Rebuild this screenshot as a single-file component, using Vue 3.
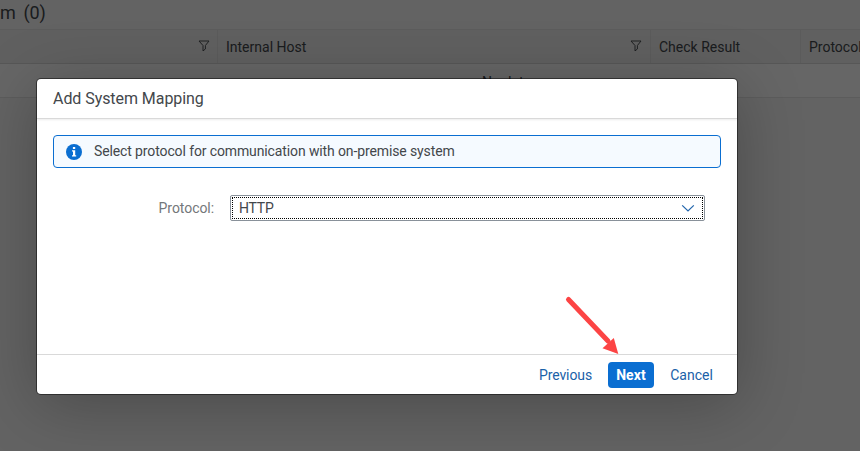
<script setup>
const columns = [
  { key: 'virtual', label: '', filter: true },
  { key: 'internal', label: 'Internal Host', filter: true },
  { key: 'check', label: 'Check Result', filter: false },
  { key: 'protocol', label: 'Protocol', filter: false },
]
</script>

<template>
  <div class="page">
    <main class="background">
      <h2 class="title"><span>m</span><span>(0)</span></h2>
      <div class="table-head">
        <div v-for="c in columns" :key="c.key" class="th" :class="c.key">
          <span>{{ c.label }}</span>
          <svg v-if="c.filter" class="filter" width="12" height="12" viewBox="0 0 12 12">
            <path d="M1 1H11L7.4 5.5V9L5 10.9V5.5Z" fill="none" stroke="#4c5054" stroke-width="1" stroke-linejoin="round" />
          </svg>
        </div>
      </div>
      <div class="empty-row">No data</div>
    </main>
    <div class="overlay">
      <section class="dialog" role="dialog">
        <header class="dialog-head">Add System Mapping</header>
        <div class="dialog-body">
          <div class="strip">
            <svg width="16" height="16" viewBox="0 0 16 16">
              <circle cx="8" cy="8" r="8" fill="#0a6ed1" />
              <path d="M6.9 3h2.3v2H6.9zM6 6.3h3.2v4.9h1v1.3H6v-1.3h1V7.6H6z" fill="#fff" />
            </svg>
            <span class="message">Select protocol for communication with on-premise system</span>
          </div>
          <div class="field">
            <label>Protocol:</label>
            <div class="select">
              <div class="focus">
                <span class="value">HTTP</span>
                <svg width="14" height="8" viewBox="0 0 14 8">
                  <path d="M1.2 1.4L7 6.9L12.8 1.4" fill="none" stroke="#2467ad" stroke-width="1.3" />
                </svg>
              </div>
            </div>
          </div>
        </div>
        <footer class="dialog-foot">
          <button class="prev">Previous</button>
          <button class="next">Next</button>
          <button class="cancel">Cancel</button>
        </footer>
      </section>
      <svg class="arrow" width="56" height="62" viewBox="0 0 56 62">
        <path d="M5.5 6.5L45 48" stroke="#fc4444" stroke-width="5" stroke-linecap="round" />
        <path d="M55.3 61L50.8 45L39.5 55.3Z" fill="#fc4444" />
      </svg>
    </div>
  </div>
</template>

<style>
body { overflow: hidden; }
</style>

<style scoped>
* { box-sizing: border-box; }
.page {
  position: relative;
  width: 860px;
  height: 451px;
  overflow: hidden;
  font-family: Roboto, "Liberation Sans", sans-serif;
  font-size: 14px;
  color: #43474b;
}
.background { height: 451px; background: #f8f8f8; }
.title {
  display: flex;
  gap: 8px;
  height: 29px;
  margin: 0;
  font-size: 18px;
  font-weight: 400;
  line-height: 26px;
  letter-spacing: -0.2px;
}
.table-head {
  display: grid;
  grid-template-columns: 218px 433px 150px 150px;
  height: 35px;
  border-top: 1px solid #e5e5e5;
  border-bottom: 1px solid #d9d9d9;
  background: #f0f0f0;
}
.th {
  display: flex;
  align-items: center;
  justify-content: space-between;
  padding: 1px 8px 0;
  border-right: 1px solid #e3e3e3;
}
.filter { margin-top: -2px; }
.virtual .filter { margin-right: -1px; }
.empty-row {
  height: 34px;
  padding: 2px 0 0 482px;
  line-height: 32px;
  background: #fff;
  border-bottom: 1px solid #e5e5e5;
}
.overlay { position: absolute; inset: 0; background: rgba(0, 0, 0, 0.6); }
.dialog {
  position: absolute;
  left: 37px;
  top: 79px;
  display: flex;
  flex-direction: column;
  width: 700px;
  height: 315px;
  border-radius: 4px;
  background: #fff;
  box-shadow: 0 0 0 1px rgba(0, 0, 0, 0.45), 0 10px 65px rgba(0, 0, 0, 0.26);
}
.dialog-head {
  height: 40px;
  padding-left: 16px;
  font-size: 16px;
  line-height: 40px;
  letter-spacing: -0.06px;
  border-bottom: 1px solid #d9d9d9;
  box-shadow: 0 1px 2px rgba(0, 0, 0, 0.08);
}
.dialog-body { flex: 1; padding: 16px; }
.strip {
  display: flex;
  align-items: center;
  gap: 12px;
  height: 33px;
  padding-left: 12px;
  border: 1px solid #0a6ed1;
  border-radius: 4px;
  background: #f5faff;
}
.message { letter-spacing: -0.118px; padding-bottom: 1px; }
.field { display: flex; align-items: center; margin-top: 27px; }
.field label {
  width: 177px;
  padding-right: 16px;
  text-align: right;
  color: #74777a;
  letter-spacing: -0.06px;
  white-space: nowrap;
}
.select {
  width: 475px;
  height: 26px;
  padding: 1px;
  border: 1px solid #89919a;
  border-radius: 2px;
}
.focus {
  display: flex;
  align-items: center;
  justify-content: space-between;
  height: 22px;
  padding: 0 7px 0 6px;
  border: 1px dotted #000;
}
.value { letter-spacing: -0.2px; }
.dialog-foot {
  display: flex;
  align-items: center;
  justify-content: flex-end;
  height: 40px;
  padding-right: 16px;
  border-top: 1px solid #d9d9d9;
}
button {
  height: 26px;
  padding: 0;
  border: 0;
  border-radius: 4px;
  background: transparent;
  font: inherit;
  color: #1a61a8;
}
.prev { width: 69px; margin-right: 8px; letter-spacing: -0.1px; }
.next { width: 46px; background: #0a6ed1; color: #fff; font-weight: 700; letter-spacing: 0.1px; }
.cancel { width: 75px; margin-right: -8px; }
.arrow { position: absolute; left: 563px; top: 293px; }
</style>
